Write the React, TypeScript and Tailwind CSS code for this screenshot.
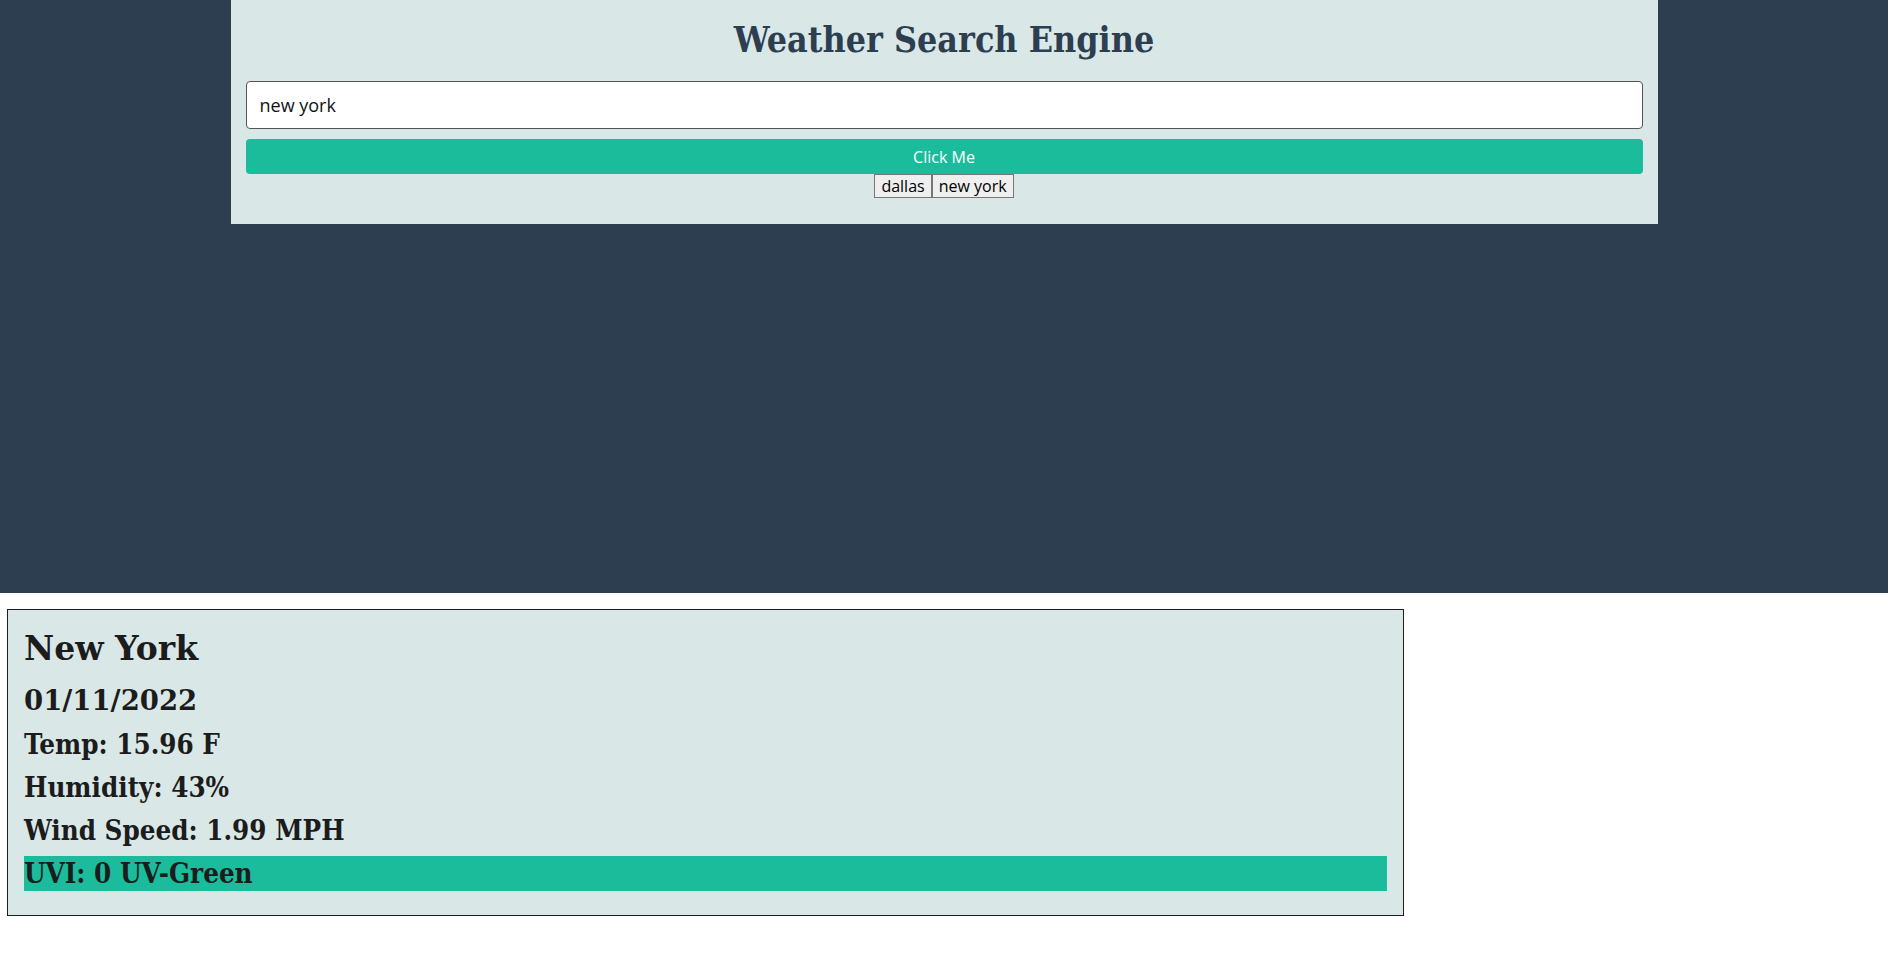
export default function App() {
  const serif = { fontFamily: '"DejaVu Serif", "Liberation Serif", serif' };
  return (
    <div className="min-h-screen bg-white" style={{ fontFamily: '"Open Sans", "Noto Sans", sans-serif' }}>
      <div className="h-[593px] bg-[#2c3e50]">
        <div className="mx-auto w-[1427px] bg-[#d9e8e7] px-[15px] pb-[26px]">
          <h1
            className="pt-[16px] pb-[17px] text-center text-[35.5px] font-bold font-stretch-condensed leading-[48px] text-[#2c3e50]"
            style={serif}
          >
            Weather Search Engine
          </h1>
          <input
            className="block h-[48px] w-full rounded-[4px] border border-[#555] bg-white px-[13px] text-[18px] text-[#111] outline-none"
            defaultValue="new york"
          />
          <button className="mt-[10px] block h-[35px] w-full rounded-[4px] bg-[#1abc9c] text-[16px] text-white">
            Click Me
          </button>
          <div className="flex justify-center">
            <button className="h-[24px] border border-[#767676] bg-[#efefef] px-[6px] text-[16px] leading-none text-black">
              dallas
            </button>
            <button className="h-[24px] border border-[#767676] bg-[#efefef] px-[6px] text-[16px] leading-none text-black">
              new york
            </button>
          </div>
        </div>
      </div>
      <div
        className="mt-[16px] ml-[7px] w-[1397px] border border-[#1e1e1e] bg-[#d9e8e7] px-[16px] pt-[14px] pb-[24px] text-[#1c1c1c]"
        style={serif}
      >
        <h2 className="text-[33px] font-bold leading-[50px]">New York</h2>
        <h3 className="pt-[2px] text-[27.5px] font-bold leading-[48px]">01/11/2022</h3>
        <div className="mt-[3px] flex flex-col gap-[8px]">
          <p className="h-[35px] text-[27.5px] font-bold font-stretch-condensed leading-[35px]">Temp: 15.96 F</p>
          <p className="h-[35px] text-[27.5px] font-bold font-stretch-condensed leading-[35px]">Humidity: 43%</p>
          <p className="h-[35px] text-[27.5px] font-bold font-stretch-condensed leading-[35px]">Wind Speed: 1.99 MPH</p>
          <p className="h-[35px] bg-[#1abc9c] text-[27.5px] font-bold font-stretch-condensed leading-[35px]">UVI: 0 UV-Green</p>
        </div>
      </div>
    </div>
  );
}
